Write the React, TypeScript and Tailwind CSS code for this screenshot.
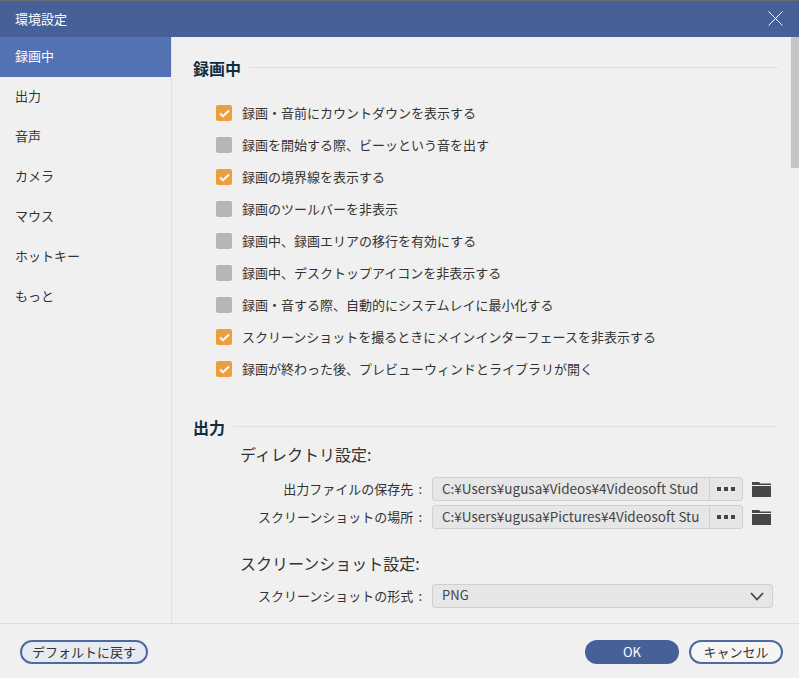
import React from "react";

const navItems = ["録画中", "出力", "音声", "カメラ", "マウス", "ホットキー", "もっと"];
const options: [string, boolean][] = [
  ["録画・音前にカウントダウンを表示する", true],
  ["録画を開始する際、ビーッという音を出す", false],
  ["録画の境界線を表示する", true],
  ["録画のツールバーを非表示", false],
  ["録画中、録画エリアの移行を有効にする", false],
  ["録画中、デスクトップアイコンを非表示する", false],
  ["録画・音する際、自動的にシステムレイに最小化する", false],
  ["スクリーンショットを撮るときにメインインターフェースを非表示する", true],
  ["録画が終わった後、プレビューウィンドとライブラリが開く", true],
];

function Check({ on }: { on: boolean }) {
  return (
    <span className={`flex h-4 w-4 shrink-0 items-center justify-center rounded-[2px] ${on ? "bg-[#eb9f3f]" : "bg-[#b5b5b5]"}`}>
      {on && (
        <svg width="11" height="9" viewBox="0 0 11 9" fill="none">
          <path d="M1 4.5 L4 7.2 L10 1.5" stroke="#fff" strokeWidth="1.9" />
        </svg>
      )}
    </span>
  );
}

function Heading({ text }: { text: string }) {
  return (
    <div className="flex h-5 items-center gap-2 pr-[13px]">
      <span className="text-[16px] font-bold leading-5 text-[#0f2d40]">{text}</span>
      <span className="mb-[1px] h-px flex-1 bg-[#dfdfdf]" />
    </div>
  );
}

function Folder() {
  return (
    <svg width="19" height="15" viewBox="0 0 19 15" className="shrink-0">
      <path d="M0 0 H7 L8.5 1.5 H19 V3 H0 Z M0 4 H19 V15 H0 Z" fill="#474747" />
    </svg>
  );
}

function Label({ text }: { text: string }) {
  return (
    <span className="flex w-[184px] shrink-0 justify-end pr-[2px] text-[13px] leading-6 text-[#333]">
      <span>{text}</span>
      <span className="ml-[5px]">:</span>
    </span>
  );
}

function PathRow({ label, value }: { label: string; value: string }) {
  return (
    <div className="flex h-6 items-center">
      <Label text={label} />
      <div className="ml-2 flex h-6 w-[311px] shrink-0 items-stretch rounded-[3px] border border-[#d0d0d0] bg-[#e6e6e6]">
        <span className="w-[276px] shrink-0 pl-[9px] text-[13.5px] leading-[21px] text-[#444]">
          <span className="block w-[260px] overflow-hidden whitespace-nowrap">{value}</span>
        </span>
        <span className="flex flex-1 items-center justify-center gap-[3px] border-l border-[#cfcfcf]">
          <span className="h-[4px] w-[4px] bg-[#444]" />
          <span className="h-[4px] w-[4px] bg-[#444]" />
          <span className="h-[4px] w-[4px] bg-[#444]" />
        </span>
      </div>
      <span className="ml-[9px] flex"><Folder /></span>
    </div>
  );
}

export default function App() {
  return (
    <div
      className="flex h-[678px] w-[799px] flex-col overflow-hidden bg-[#f0f0f0] text-[13px] text-[#333]"
      style={{ fontFamily: '"Noto Sans CJK JP", "Noto Sans", sans-serif' }}
    >
      <header className="flex h-[37px] shrink-0 items-center justify-between border-t border-[#6b6b72] bg-[#456198] pb-[1px] pl-[15px] pr-4 text-white">
        <span className="text-[13px]">環境設定</span>
        <svg width="15" height="15" viewBox="0 0 15 15" fill="none">
          <path d="M0.5 0.5 L14.5 14.5 M14.5 0.5 L0.5 14.5" stroke="#fff" strokeWidth="1" />
        </svg>
      </header>

      <div className="flex min-h-0 flex-1">
        <nav className="w-[172px] shrink-0 border-r border-[#e2e2e2]">
          {navItems.map((n, i) => (
            <div
              key={n}
              className={`flex h-10 items-center pb-[2px] pl-[15px] text-[13px] ${i === 0 ? "bg-[#5272b4] text-white" : "text-[#333]"}`}
            >
              {n}
            </div>
          ))}
        </nav>

        <main className="min-w-0 flex-1 overflow-hidden pl-[21px] pt-[21px]">
          <Heading text="録画中" />
          <div className="mt-[19px] flex flex-col pl-[23px]">
            {options.map(([t, on]) => (
              <label key={t} className="flex h-8 items-center gap-[10px] text-[13px]">
                <Check on={on} />
                <span>{t}</span>
              </label>
            ))}
          </div>

          <div className="mt-[32px]">
            <Heading text="出力" />
          </div>
          <div className="pl-[47px]">
            <h3 className="mt-[5px] h-6 text-[16px] font-normal leading-6 text-[#333]">ディレクトリ設定:</h3>
            <div className="mt-[11px] flex flex-col gap-1">
              <PathRow label="出力ファイルの保存先" value="C:¥Users¥ugusa¥Videos¥4Videosoft Stud" />
              <PathRow label="スクリーンショットの場所" value="C:¥Users¥ugusa¥Pictures¥4Videosoft Stu" />
            </div>
            <h3 className="mt-[22px] h-6 text-[16px] font-normal leading-6 text-[#333]">スクリーンショット設定:</h3>
            <div className="mt-[9px] flex h-6 items-center">
              <Label text="スクリーンショットの形式" />
              <div className="ml-2 flex h-6 w-[341px] shrink-0 items-center justify-between rounded-[3px] border border-[#cfcfcf] bg-[#e6e6e6] pb-[2px] pl-[9px] pr-[8px] text-[13px] text-[#444]">
                <span>PNG</span>
                <svg width="14" height="9" viewBox="0 0 14 9" fill="none" className="mt-[2px]">
                  <path d="M1 1 L7 7.5 L13 1" stroke="#444" strokeWidth="1.8" />
                </svg>
              </div>
            </div>
          </div>
        </main>

        <div className="w-2 shrink-0">
          <div className="h-[131px] bg-[#c4c4c4]" />
        </div>
      </div>

      <footer className="flex h-[55px] shrink-0 items-start justify-between border-t border-[#dcdcdc] pl-5 pr-4 pt-4">
        <button className="h-6 w-[128px] rounded-full border-2 border-[#4f6a9f] bg-[#e6eaf1] text-[13px] leading-5 text-[#333]">
          デフォルトに戻す
        </button>
        <div className="flex gap-[10px]">
          <button className="h-6 w-[94px] rounded-full bg-[#456198] text-[13px] leading-6 text-white">OK</button>
          <button className="h-6 w-[94px] rounded-full border-2 border-[#4f6a9f] bg-[#f5f5f5] text-[13px] leading-5 text-[#333]">
            キャンセル
          </button>
        </div>
      </footer>
    </div>
  );
}
